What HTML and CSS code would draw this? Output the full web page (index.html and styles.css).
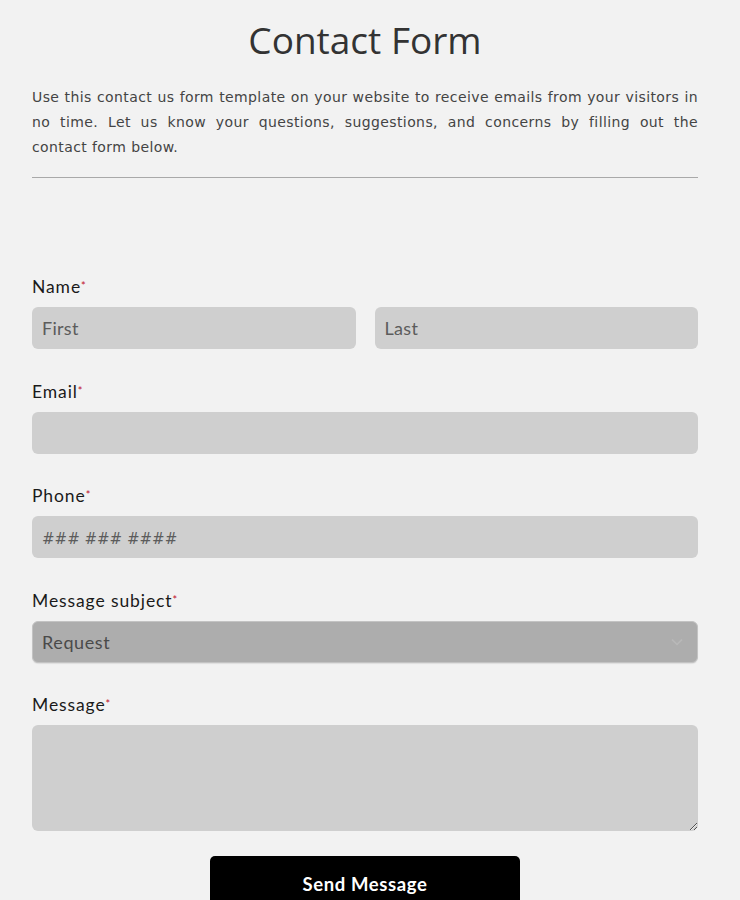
FILE: index.html
```html
<!DOCTYPE html>
<html lang="en">
<head>
<meta charset="utf-8">
<title>Contact Form</title>
<link rel="stylesheet" href="styles.css">
</head>
<body>
<main class="page">
  <h1 class="title">Contact Form</h1>
  <p class="intro">Use this contact us form template on your website to receive emails from your visitors in no time. Let us know your questions, suggestions, and concerns by filling out the <span class="keep">contact form below.</span></p>
  <hr class="rule">
  <form class="form">
    <div class="field">
      <label class="label">Name<span class="req">*</span></label>
      <div class="row">
        <input class="input" type="text" placeholder="First">
        <input class="input" type="text" placeholder="Last">
      </div>
    </div>
    <div class="field">
      <label class="label">Email<span class="req">*</span></label>
      <input class="input" type="email">
    </div>
    <div class="field">
      <label class="label">Phone<span class="req">*</span></label>
      <input class="input phone" type="tel" placeholder="### ### ####">
    </div>
    <div class="field">
      <label class="label">Message subject<span class="req">*</span></label>
      <div class="select">
        <span class="select-text">Request</span>
        <svg class="caret" width="12" height="8" viewBox="0 0 12 8"><path d="M1 1.5 L6 6.5 L11 1.5" fill="none" stroke="#b9b9b9" stroke-width="1.5"/></svg>
      </div>
    </div>
    <div class="field">
      <label class="label">Message<span class="req">*</span></label>
      <textarea class="textarea"></textarea>
    </div>
    <div class="actions">
      <button class="btn" type="button">Send Message</button>
    </div>
  </form>
</main>
</body>
</html>
```
FILE: styles.css
```css
html, body {
  margin: 0;
  padding: 0;
  background: #f2f2f2;
}
.page {
  width: 666px;
  margin: 0 0 0 32px;
  padding-top: 18px;
}
.title {
  margin: 0;
  font-family: "Open Sans", sans-serif;
  font-weight: 400;
  font-size: 37px;
  line-height: 44px;
  color: #333;
  text-align: center;
}
.intro {
  margin: 23px 0 0;
  font-family: "DejaVu Sans", Verdana, sans-serif;
  font-size: 14px;
  line-height: 25px;
  letter-spacing: 0.4px;
  color: #444;
  text-align: justify;
}
.keep {
  white-space: nowrap;
}
.rule {
  margin: 17px 0 0;
  border: 0;
  border-top: 1.5px solid #a9a9a9;
  height: 0;
}
.form {
  padding-top: 98px;
  font-family: Lato, sans-serif;
}
.field {
  display: flex;
  flex-direction: column;
  margin-bottom: 31.5px;
}
.label {
  font-size: 17.5px;
  line-height: 22px;
  color: #1a1a1a;
  margin-bottom: 9px;
  letter-spacing: 0.9px;
}
.req {
  color: #c0102a;
  font-size: 11px;
  vertical-align: top;
  position: relative;
  top: -1px;
  letter-spacing: 0;
}
.row {
  display: flex;
  gap: 19px;
}
.row .input {
  flex: 1;
  min-width: 0;
}
.input {
  box-sizing: border-box;
  height: 42px;
  border: 0;
  border-radius: 6px;
  background: #cfcfcf;
  padding: 0 10px;
  font-family: Lato, sans-serif;
  font-size: 18px;
  color: #555;
}
.input::placeholder {
  color: #5c5c5c;
  letter-spacing: 0.3px;
}
.phone::placeholder {
  font-family: "DejaVu Sans", sans-serif;
  font-size: 15px;
  letter-spacing: 0;
}
.select {
  box-sizing: border-box;
  height: 42px;
  border-radius: 6px;
  background: #adadad;
  border: 1px solid #c3c3c3;
  box-shadow: 0 1px 1px rgba(0,0,0,0.08);
  display: flex;
  align-items: center;
  justify-content: space-between;
  padding: 0 14px 0 9px;
}
.select-text {
  font-size: 18px;
  color: #4a4a4a;
  letter-spacing: 0.6px;
}
.textarea {
  box-sizing: border-box;
  height: 106px;
  border: 0;
  border-radius: 6px;
  background: #cfcfcf;
  resize: vertical;
  display: block;
}
.actions {
  display: flex;
  justify-content: center;
  margin-top: -6.5px;
}
.btn {
  width: 310px;
  height: 56px;
  border: 0;
  border-radius: 5px;
  background: #000;
  color: #fff;
  font-family: Lato, sans-serif;
  font-weight: 700;
  font-size: 18.5px;
  letter-spacing: 0.6px;
  padding: 0;
  display: flex;
  align-items: center;
  justify-content: center;
}
```
